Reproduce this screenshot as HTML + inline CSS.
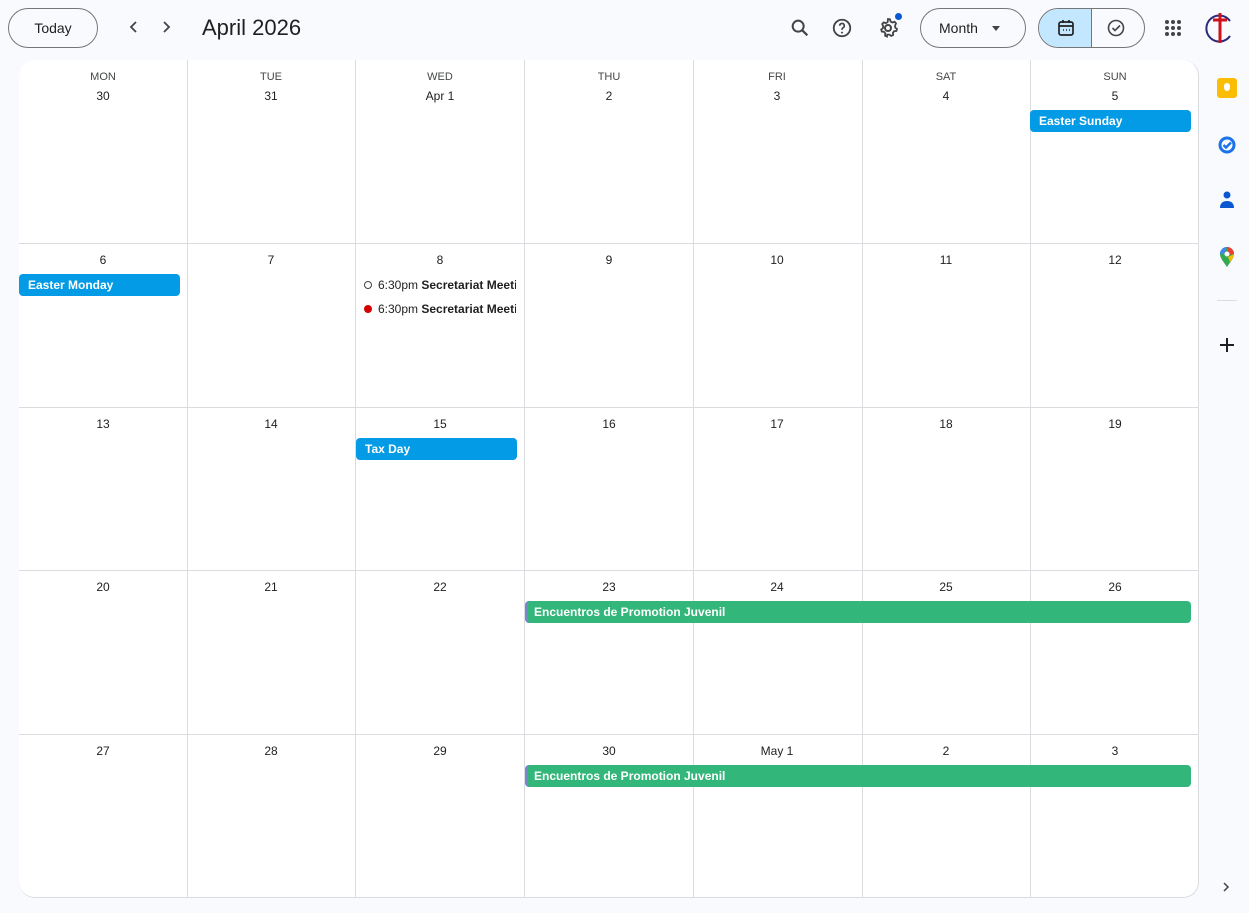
<!DOCTYPE html>
<html><head><meta charset="utf-8"><style>
*{box-sizing:border-box;margin:0;padding:0}
body{width:1249px;height:913px;background:#f8fafd;font-family:"Liberation Sans",Arial,sans-serif;color:#1f1f1f;position:relative;overflow:hidden}
.abs{position:absolute}
.btn{position:absolute;border:1px solid #747775;border-radius:20px;background:transparent;font-size:14px;display:flex;align-items:center;justify-content:center}
.card{position:absolute;left:19px;top:60px;width:1180px;height:838px;background:#fff;border-radius:16px;overflow:hidden;border-right:1px solid #dadce0;border-bottom:1px solid #dadce0}
.vl{position:absolute;top:0;bottom:0;width:1px;background:#dadce0}
.hl{position:absolute;left:0;right:0;height:1px;background:#dadce0}
.dow{position:absolute;font-size:11px;color:#444746;width:168px;text-align:center;top:11px}
.dn{position:absolute;font-size:12px;font-weight:500;color:#1f1f1f;width:168px;text-align:center}
.ev{position:absolute;height:22px;border-radius:4px;color:#fff;font-size:12px;font-weight:bold;padding-left:9px;line-height:22px;white-space:nowrap;overflow:hidden}
.blue{background:#039be5}.green{background:#33b679;border-left:3px solid #7986cb;padding-left:6px}
.te{position:absolute;font-size:12px;white-space:nowrap;overflow:hidden;width:152px;height:18px;line-height:18px}
</style></head><body>
<div class="btn" style="left:8px;top:8px;width:90px;height:40px">Today</div>
<svg class="abs" style="left:126px;top:19px" width="16" height="16" viewBox="0 0 16 16"><path d="M10 3L5 8l5 5" stroke="#444" stroke-width="1.8" fill="none"/></svg>
<svg class="abs" style="left:158px;top:19px" width="16" height="16" viewBox="0 0 16 16"><path d="M6 3l5 5-5 5" stroke="#444" stroke-width="1.8" fill="none"/></svg>
<div class="abs" style="left:202px;top:15px;font-size:22px;color:#1f1f1f">April 2026</div>
<svg class="abs" style="left:789px;top:17px" width="22" height="22" viewBox="0 0 24 24"><circle cx="10" cy="10" r="6" stroke="#444" stroke-width="2.2" fill="none"/><path d="M14.5 14.5L20 20" stroke="#444" stroke-width="2.4"/></svg>
<svg class="abs" style="left:831px;top:17px" width="22" height="22" viewBox="0 0 24 24"><circle cx="12" cy="12" r="9" stroke="#444" stroke-width="2" fill="none"/><path d="M9.5 9.5a2.5 2.5 0 1 1 3.5 2.3c-.7.4-1 .9-1 1.7v.5" stroke="#444" stroke-width="1.8" fill="none"/><circle cx="12" cy="17" r="1.1" fill="#444"/></svg>
<svg class="abs" style="left:876px;top:16px" width="24" height="24" viewBox="0 0 24 24"><circle cx="12" cy="12" r="3" stroke="#444" stroke-width="2" fill="none"/><path d="M12 3l2 .3.6 2.2 1.8 1 2.2-.7 1.4 1.6-.9 2.1.1 2 1.8 1.4-.6 2-2.3.3-1.2 1.6.2 2.3-1.9.9-1.8-1.4h-2.1L11 20.6l-1.9-.9.2-2.3-1.2-1.6L5.8 15.5l-.6-2 1.8-1.4.1-2-.9-2.1 1.4-1.6 2.2.7 1.8-1L12 3z" stroke="#444" stroke-width="1.8" fill="none"/></svg>
<div class="abs" style="left:895px;top:13px;width:7px;height:7px;border-radius:50%;background:#0b57d0"></div>
<div class="btn" style="left:920px;top:8px;width:106px;height:40px;justify-content:flex-start;padding-left:18px">Month<span style="margin-left:14px;border-left:4px solid transparent;border-right:4px solid transparent;border-top:5px solid #444"></span></div>
<div class="abs" style="left:1038px;top:8px;width:107px;height:40px;border:1px solid #747775;border-radius:20px;overflow:hidden">
<div class="abs" style="left:0;top:0;width:53px;height:40px;background:#c2e7ff;border-right:1px solid #747775"></div>
<svg class="abs" style="left:18px;top:10px" width="18" height="18" viewBox="0 0 18 18"><rect x="2" y="3" width="14" height="13" rx="2" stroke="#222" stroke-width="1.7" fill="none"/><path d="M2 7h14M6 1v3M12 1v3" stroke="#222" stroke-width="1.7"/><path d="M6 11h1M9 11h1M12 11h1" stroke="#222" stroke-width="1.4"/></svg>
<svg class="abs" style="left:68px;top:10px" width="18" height="18" viewBox="0 0 18 18"><circle cx="9" cy="9" r="7.5" stroke="#444" stroke-width="1.6" fill="none"/><path d="M5.5 9l2.5 2.5 5-5" stroke="#444" stroke-width="1.6" fill="none"/></svg>
</div>
<svg class="abs" style="left:1164px;top:19px" width="18" height="18" viewBox="0 0 18 18" fill="#444"><circle cx="3" cy="3" r="2"/><circle cx="9" cy="3" r="2"/><circle cx="15" cy="3" r="2"/><circle cx="3" cy="9" r="2"/><circle cx="9" cy="9" r="2"/><circle cx="15" cy="9" r="2"/><circle cx="3" cy="15" r="2"/><circle cx="9" cy="15" r="2"/><circle cx="15" cy="15" r="2"/></svg>
<svg class="abs" style="left:1204px;top:12px" width="32" height="32" viewBox="0 0 32 32"><path d="M26 9A13 13 0 1 0 26 24" stroke="#2a2a7a" stroke-width="2" fill="none"/><path d="M16 1v30M9 8h14" stroke="#d0101a" stroke-width="3"/></svg>
<div class="abs" style="left:1217px;top:78px;width:20px;height:20px;border-radius:3px;background:#fbbc04"></div>
<div class="abs" style="left:1224px;top:83px;width:6px;height:8px;border-radius:3px;background:#fff"></div>
<svg class="abs" style="left:1217px;top:135px" width="20" height="20" viewBox="0 0 20 20"><circle cx="10" cy="10" r="7" stroke="#1a73e8" stroke-width="3" fill="none"/><path d="M6.5 10l2.5 2.5 5-5" stroke="#1a73e8" stroke-width="2.4" fill="none"/></svg>
<svg class="abs" style="left:1218px;top:190px" width="18" height="20" viewBox="0 0 18 20"><circle cx="9" cy="5" r="3.5" fill="#0b57d0"/><path d="M2 18c0-5 3-7 7-7s7 2 7 7z" fill="#0b57d0"/></svg>
<svg class="abs" style="left:1218px;top:246px" width="18" height="22" viewBox="0 0 18 22"><path d="M9 21C5 15 2 12 2 8a7 7 0 0 1 14 0c0 4-3 7-7 13z" fill="#34a853"/><path d="M2 8a7 7 0 0 1 7-7l-3 7z" fill="#4285f4"/><path d="M9 1a7 7 0 0 1 7 7l-5 1z" fill="#ea4335"/><path d="M16 8c0 3-2 5-4 8l-2-5z" fill="#fbbc04"/><circle cx="9" cy="8" r="2.5" fill="#fff"/></svg>
<div class="abs" style="left:1217px;top:300px;width:20px;height:1px;background:#dadce0"></div>
<svg class="abs" style="left:1219px;top:337px" width="16" height="16" viewBox="0 0 16 16"><path d="M8 1v14M1 8h14" stroke="#1f1f1f" stroke-width="2"/></svg>
<svg class="abs" style="left:1221px;top:881px" width="10" height="12" viewBox="0 0 10 12"><path d="M3 2l4 4-4 4" stroke="#444" stroke-width="1.5" fill="none"/></svg>

<div class="card">
<div class="vl" style="left:168px"></div><div class="vl" style="left:336px"></div><div class="vl" style="left:505px"></div><div class="vl" style="left:674px"></div><div class="vl" style="left:843px"></div><div class="vl" style="left:1011px"></div>
<div class="hl" style="top:183px"></div><div class="hl" style="top:347px"></div><div class="hl" style="top:510px"></div><div class="hl" style="top:674px"></div>
<div class="dow" style="left:0">MON</div><div class="dow" style="left:168px">TUE</div><div class="dow" style="left:337px">WED</div><div class="dow" style="left:506px">THU</div><div class="dow" style="left:674px">FRI</div><div class="dow" style="left:843px">SAT</div><div class="dow" style="left:1012px">SUN</div>

<div class="dn" style="left:0;top:29px">30</div><div class="dn" style="left:168px;top:29px">31</div><div class="dn" style="left:337px;top:29px">Apr 1</div><div class="dn" style="left:506px;top:29px">2</div><div class="dn" style="left:674px;top:29px">3</div><div class="dn" style="left:843px;top:29px">4</div><div class="dn" style="left:1012px;top:29px">5</div>
<div class="dn" style="left:0;top:193px">6</div><div class="dn" style="left:168px;top:193px">7</div><div class="dn" style="left:337px;top:193px">8</div><div class="dn" style="left:506px;top:193px">9</div><div class="dn" style="left:674px;top:193px">10</div><div class="dn" style="left:843px;top:193px">11</div><div class="dn" style="left:1012px;top:193px">12</div>
<div class="dn" style="left:0;top:357px">13</div><div class="dn" style="left:168px;top:357px">14</div><div class="dn" style="left:337px;top:357px">15</div><div class="dn" style="left:506px;top:357px">16</div><div class="dn" style="left:674px;top:357px">17</div><div class="dn" style="left:843px;top:357px">18</div><div class="dn" style="left:1012px;top:357px">19</div>
<div class="dn" style="left:0;top:520px">20</div><div class="dn" style="left:168px;top:520px">21</div><div class="dn" style="left:337px;top:520px">22</div><div class="dn" style="left:506px;top:520px">23</div><div class="dn" style="left:674px;top:520px">24</div><div class="dn" style="left:843px;top:520px">25</div><div class="dn" style="left:1012px;top:520px">26</div>
<div class="dn" style="left:0;top:684px">27</div><div class="dn" style="left:168px;top:684px">28</div><div class="dn" style="left:337px;top:684px">29</div><div class="dn" style="left:506px;top:684px">30</div><div class="dn" style="left:674px;top:684px">May 1</div><div class="dn" style="left:843px;top:684px">2</div><div class="dn" style="left:1012px;top:684px">3</div>

<div class="ev blue" style="left:1011px;top:50px;width:161px">Easter Sunday</div>
<div class="ev blue" style="left:0;top:214px;width:161px">Easter Monday</div>
<div class="ev blue" style="left:337px;top:378px;width:161px">Tax Day</div>
<div class="ev green" style="left:506px;top:541px;width:666px">Encuentros de Promotion Juvenil</div>
<div class="ev green" style="left:506px;top:705px;width:666px">Encuentros de Promotion Juvenil</div>
<div class="te" style="left:345px;top:216px"><span style="display:inline-block;width:8px;height:8px;border-radius:50%;border:1px solid #444;margin-right:6px"></span>6:30pm <b>Secretariat Meeting</b></div>
<div class="te" style="left:345px;top:240px"><span style="display:inline-block;width:8px;height:8px;border-radius:50%;background:#d50000;margin-right:6px"></span>6:30pm <b>Secretariat Meeting</b></div>
</div>
</body></html>
